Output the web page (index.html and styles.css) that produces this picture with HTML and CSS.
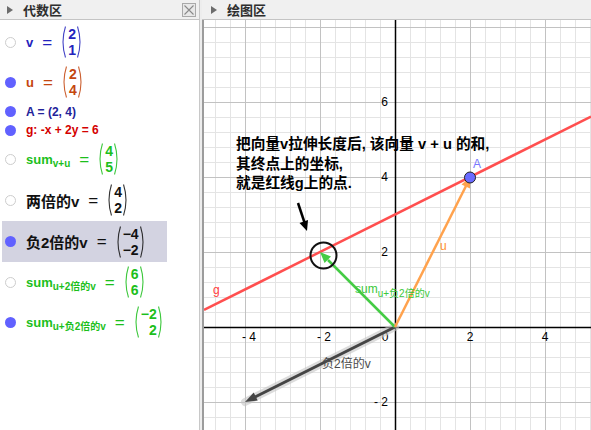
FILE: index.html
```html
<!DOCTYPE html>
<html lang="zh">
<head>
<meta charset="utf-8">
<title>GeoGebra</title>
<link rel="stylesheet" href="styles.css">
</head>
<body>
<div class="app">
  <section class="algebra">
    <header class="bar">
      <span class="tri"></span><span class="title">代数区</span>
      <span class="close"><svg width="12" height="12" viewBox="0 0 12 12"><path d="M1.5 1.5L10.5 10.5M10.5 1.5L1.5 10.5" stroke="#8a8a8a" stroke-width="1.1" fill="none"/></svg></span>
    </header>
    <ul class="list">
      <li class="row h40 c-v">
        <span class="dot off"></span>
        <span class="lbl">v</span><span class="eq">=</span>
        <span class="mat"><svg class="par" viewBox="0 0 6 32"><path d="M5.5 0.5Q0.5 16 5.5 31.5"/></svg><span class="col"><span>2</span><span>1</span></span><svg class="par" viewBox="0 0 6 32"><path d="M0.5 0.5Q5.5 16 0.5 31.5"/></svg></span>
      </li>
      <li class="row h40 c-u">
        <span class="dot on"></span>
        <span class="lbl">u</span><span class="eq">=</span>
        <span class="mat"><svg class="par" viewBox="0 0 6 32"><path d="M5.5 0.5Q0.5 16 5.5 31.5"/></svg><span class="col"><span>2</span><span>4</span></span><svg class="par" viewBox="0 0 6 32"><path d="M0.5 0.5Q5.5 16 0.5 31.5"/></svg></span>
      </li>
      <li class="row h19 c-a">
        <span class="dot on"></span>
        <span class="small">A = (2, 4)</span>
      </li>
      <li class="row h18 c-g">
        <span class="dot on"></span>
        <span class="small">g: -x + 2y = 6</span>
      </li>
      <li class="row h40 c-s">
        <span class="dot off"></span>
        <span class="lbl">sum<sub>v+u</sub></span><span class="eq">=</span>
        <span class="mat"><svg class="par" viewBox="0 0 6 32"><path d="M5.5 0.5Q0.5 16 5.5 31.5"/></svg><span class="col"><span>4</span><span>5</span></span><svg class="par" viewBox="0 0 6 32"><path d="M0.5 0.5Q5.5 16 0.5 31.5"/></svg></span>
      </li>
      <li class="row h42 c-k">
        <span class="dot off"></span>
        <span class="lbl cjk">两倍的v</span><span class="eq">=</span>
        <span class="mat"><svg class="par" viewBox="0 0 6 32"><path d="M5.5 0.5Q0.5 16 5.5 31.5"/></svg><span class="col"><span>4</span><span>2</span></span><svg class="par" viewBox="0 0 6 32"><path d="M0.5 0.5Q5.5 16 0.5 31.5"/></svg></span>
      </li>
      <li class="row h41 c-k sel">
        <span class="dot on"></span>
        <span class="lbl cjk">负2倍的v</span><span class="eq">=</span>
        <span class="mat"><svg class="par" viewBox="0 0 6 32"><path d="M5.5 0.5Q0.5 16 5.5 31.5"/></svg><span class="col"><span>−4</span><span>−2</span></span><svg class="par" viewBox="0 0 6 32"><path d="M0.5 0.5Q5.5 16 0.5 31.5"/></svg></span>
      </li>
      <li class="row h40 c-s">
        <span class="dot off"></span>
        <span class="lbl">sum<sub>u+2倍的v</sub></span><span class="eq">=</span>
        <span class="mat"><svg class="par" viewBox="0 0 6 32"><path d="M5.5 0.5Q0.5 16 5.5 31.5"/></svg><span class="col"><span>6</span><span>6</span></span><svg class="par" viewBox="0 0 6 32"><path d="M0.5 0.5Q5.5 16 0.5 31.5"/></svg></span>
      </li>
      <li class="row h40 c-s">
        <span class="dot on"></span>
        <span class="lbl">sum<sub>u+负2倍的v</sub></span><span class="eq">=</span>
        <span class="mat"><svg class="par" viewBox="0 0 6 32"><path d="M5.5 0.5Q0.5 16 5.5 31.5"/></svg><span class="col"><span>−2</span><span>2</span></span><svg class="par" viewBox="0 0 6 32"><path d="M0.5 0.5Q5.5 16 0.5 31.5"/></svg></span>
      </li>
    </ul>
  </section>
  <div class="splitter"></div>
  <section class="graphics">
    <header class="bar gbar">
      <span class="tri"></span><span class="title">绘图区</span>
    </header>
    <div class="canvas">
      <svg width="387" height="410" viewBox="0 0 387 410">
        <defs>
          <pattern id="minor" x="11" y="7" width="15" height="15" patternUnits="userSpaceOnUse"><path d="M0.5 0V15M0 0.5H15" stroke="#e4e4e4" stroke-width="1" fill="none"/></pattern>
          <pattern id="major" x="41" y="7" width="75" height="75" patternUnits="userSpaceOnUse"><path d="M0.5 0V75M0 0.5H75" stroke="#c2c2c2" stroke-width="1" fill="none"/></pattern>
        </defs>
        <rect width="387" height="410" fill="#fff"/>
        <rect width="387" height="410" fill="url(#minor)"/>
        <rect width="387" height="410" fill="url(#major)"/>
        <path d="M0 307.5H387M191.5 0V410" stroke="#000" stroke-width="1.5" fill="none"/>

        <g class="axlbl">
          <text x="184" y="86" text-anchor="end">6</text>
          <text x="184" y="161" text-anchor="end">4</text>
          <text x="184" y="236" text-anchor="end">2</text>
          <text x="184" y="386" text-anchor="end">- 2</text>
          <text x="45" y="321" text-anchor="middle">- 4</text>
          <text x="120" y="321" text-anchor="middle">- 2</text>
          <text x="181" y="321" text-anchor="middle">0</text>
          <text x="266" y="321" text-anchor="middle">2</text>
          <text x="341" y="321" text-anchor="middle">4</text>
        </g>

        <line x1="0" y1="290" x2="387" y2="96.5" stroke="#ff4f4f" stroke-width="2.5"/>

        <line x1="191" y1="307" x2="41" y2="382" stroke="#c4c4c4" stroke-opacity="0.6" stroke-width="8" stroke-linecap="round"/>
        <line x1="191" y1="307" x2="51" y2="377" stroke="#454545" stroke-width="3"/>
        <polygon points="41,382 53.7,380.6 49.7,372.6" fill="#454545"/>

        <line x1="191" y1="307" x2="124" y2="240" stroke="#44cc44" stroke-width="2.5"/>
        <polygon points="116,232 127,236.6 120.6,243" fill="#44cc44"/>

        <line x1="191" y1="307" x2="262" y2="166" stroke="#ffa24d" stroke-width="2.5"/>
        <polygon points="266,157 266,168.5 257.5,164.5" fill="#ffa24d"/>

        <circle cx="119.5" cy="235.5" r="13" fill="none" stroke="#111" stroke-width="2"/>
        <circle cx="266" cy="157.5" r="5.5" fill="#6b6bff" stroke="#222" stroke-width="1"/>

        <line x1="94" y1="183" x2="100.5" y2="202.5" stroke="#000" stroke-width="2.5"/>
        <polygon points="103,211 104,200 95.5,203" fill="#000"/>

        <text class="note" x="32" y="129">把向量v拉伸长度后, 该向量 v + u 的和,</text>
        <text class="note" x="32" y="149">其终点上的坐标,</text>
        <text class="note" x="32" y="168">就是红线g上的点.</text>

        <text x="269" y="148" class="lab" fill="#7777ff">A</text>
        <text x="236" y="230" class="lab" fill="#ff8f2e" font-size="13">u</text>
        <text x="9" y="274" class="lab" fill="#ff3a3a" font-size="14">g</text>
        <text x="151" y="273" class="lab" fill="#3ac83a" font-size="14">sum<tspan font-size="10" dy="4">u+负2倍的v</tspan></text>
        <text x="118" y="348" class="lab" fill="#4a4a4a" font-size="12">负2倍的v</text>
      </svg>
    </div>
  </section>
</div>
</body>
</html>
```

FILE: styles.css
```css
* {
  box-sizing: border-box;
  margin: 0;
  padding: 0;
}

html, body {
  width: 591px;
  height: 430px;
  overflow: hidden;
  background: #fff;
}

body {
  font-family: "Liberation Sans", "Noto Sans CJK SC", sans-serif;
  color: #000;
}

.app {
  display: flex;
  height: 430px;
}

.algebra {
  width: 200px;
  flex: none;
  display: flex;
  flex-direction: column;
  border-right: 1px solid #c8c8c8;
}

.splitter {
  width: 2px;
  flex: none;
  background: #ededed;
}

.graphics {
  flex: 1;
  display: flex;
  flex-direction: column;
  min-width: 0;
}

.bar {
  height: 20px;
  flex: none;
  background: #f0f0f0;
  border-bottom: 1px solid #c4c4c4;
  display: flex;
  align-items: center;
  padding-left: 7px;
  gap: 10px;
}

.gbar {
  padding-left: 9px;
}

.tri {
  width: 0;
  height: 0;
  border-left: 6px solid #6c6c6c;
  border-top: 4.5px solid transparent;
  border-bottom: 4.5px solid transparent;
}

.title {
  font-size: 13px;
  font-weight: bold;
  color: #2e2e2e;
  font-family: "Noto Sans CJK SC", sans-serif;
  line-height: 19px;
}

.close {
  margin-left: auto;
  margin-right: 3px;
  width: 14px;
  height: 14px;
  border: 1px solid #a9a9a9;
  background: #e8e8e8;
  display: flex;
}

.canvas {
  flex: 1;
  border-left: 2px solid #9c9c9c;
  overflow: hidden;
}

.canvas svg {
  display: block;
}

.list {
  list-style: none;
  padding-top: 2px;
}

.row {
  display: flex;
  align-items: center;
  padding-left: 5px;
  white-space: nowrap;
}

.h40 { height: 40px; }
.h41 { height: 41px; }
.h42 { height: 42px; }
.h19 { height: 19px; }
.h18 { height: 18px; }

.sel {
  background: #d3d3e1;
  width: 165px;
  margin-left: 2px;
  padding-left: 3px;
}

.dot {
  width: 11px;
  height: 11px;
  border-radius: 50%;
  flex: none;
  margin-right: 10px;
}

.dot.on {
  background: #6161ff;
}

.dot.off {
  background: #fff;
  border: 1.5px solid #cdcdcd;
}

.lbl {
  font-size: 13px;
  font-weight: bold;
}

.lbl sub {
  font-size: 10px;
  vertical-align: -3px;
  line-height: 0;
}

.cjk {
  font-size: 15px;
}

.small {
  font-size: 12px;
  font-weight: bold;
}

.eq {
  font-size: 17px;
  margin: 0 8px 0 9px;
  line-height: 1;
}

.mat {
  display: inline-flex;
  align-items: center;
  height: 32px;
}

.par {
  width: 6px;
  height: 32px;
  flex: none;
  fill: none;
  stroke: currentColor;
  stroke-width: 1.1;
  opacity: 0.85;
}

.col {
  display: flex;
  flex-direction: column;
  align-items: flex-end;
  justify-content: center;
  font-size: 14px;
  font-weight: bold;
  line-height: 16px;
  padding: 0 1px 0 2px;
}

.c-v { color: #2323bd; }
.c-u { color: #c4460f; }
.c-a { color: #23239a; }
.c-g { color: #d40000; }
.c-s { color: #1cbf1c; }
.c-k { color: #111; }

.axlbl text {
  font-family: "Liberation Sans", sans-serif;
  font-size: 12px;
  fill: #000;
}

.note {
  font-family: "Liberation Sans", "Noto Sans CJK SC", sans-serif;
  font-size: 14.7px;
  font-weight: bold;
  fill: #000;
}

.lab {
  font-family: "Liberation Sans", "Noto Sans CJK SC", sans-serif;
  font-size: 12px;
}
```
